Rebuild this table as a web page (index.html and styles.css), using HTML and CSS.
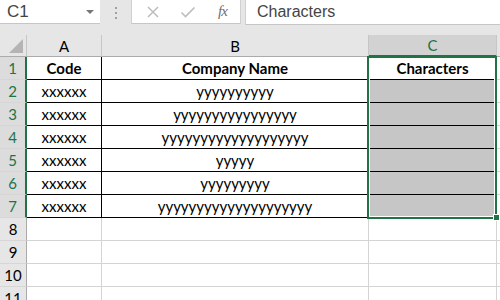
FILE: index.html
```html
<!DOCTYPE html>
<html>
<head>
<meta charset="utf-8">
<link rel="stylesheet" href="styles.css">
</head>
<body>
<div class="app">
  <div class="formula-bar">
    <div class="name-box"><span>C1</span><span class="caret"></span></div>
    <div class="grip"><i></i><i></i><i></i></div>
    <div class="fx-buttons">
      <svg class="btn" width="14" height="14" viewBox="0 0 14 14"><path d="M2 2 L12 12 M12 2 L2 12" stroke="#bdbdbd" stroke-width="1.5" fill="none"/></svg>
      <svg class="btn" width="16" height="14" viewBox="0 0 16 14"><path d="M1.5 7.5 L5.5 11.5 L14.5 2.5" stroke="#bdbdbd" stroke-width="1.6" fill="none"/></svg>
      <span class="fx">fx</span>
    </div>
    <div class="formula-input">Characters</div>
  </div>

  <div class="sheet">
    <div class="grid">
      <div class="hd corner"><span class="tri"></span></div>
      <div class="hd col">A</div>
      <div class="hd col">B</div>
      <div class="hd col sel">C</div>
      <div class="hd col tail"></div>

      <div class="rh sel">1</div>
      <div class="c t b">Code</div>
      <div class="c t b">Company Name</div>
      <div class="c t b">Characters</div>
      <div class="c tail"></div>

      <div class="rh sel">2</div>
      <div class="c t">xxxxxx</div>
      <div class="c t">yyyyyyyyyy</div>
      <div class="c t fill"></div>
      <div class="c tail"></div>

      <div class="rh sel">3</div>
      <div class="c t">xxxxxx</div>
      <div class="c t">yyyyyyyyyyyyyyyy</div>
      <div class="c t fill"></div>
      <div class="c tail"></div>

      <div class="rh sel">4</div>
      <div class="c t">xxxxxx</div>
      <div class="c t">yyyyyyyyyyyyyyyyyyy</div>
      <div class="c t fill"></div>
      <div class="c tail"></div>

      <div class="rh sel">5</div>
      <div class="c t">xxxxxx</div>
      <div class="c t">yyyyy</div>
      <div class="c t fill"></div>
      <div class="c tail"></div>

      <div class="rh sel">6</div>
      <div class="c t">xxxxxx</div>
      <div class="c t">yyyyyyyyy</div>
      <div class="c t fill"></div>
      <div class="c tail"></div>

      <div class="rh sel">7</div>
      <div class="c t">xxxxxx</div>
      <div class="c t">yyyyyyyyyyyyyyyyyyyy</div>
      <div class="c t fill"></div>
      <div class="c tail"></div>

      <div class="rh">8</div><div class="c"></div><div class="c"></div><div class="c"></div><div class="c tail"></div>
      <div class="rh">9</div><div class="c"></div><div class="c"></div><div class="c"></div><div class="c tail"></div>
      <div class="rh">10</div><div class="c"></div><div class="c"></div><div class="c"></div><div class="c tail"></div>
      <div class="rh">11</div><div class="c"></div><div class="c"></div><div class="c"></div><div class="c tail"></div>
    </div>
    <div class="selection"></div>
    <div class="handle"></div>
  </div>
</div>
</body>
</html>
```

FILE: styles.css
```css
html, body {
  margin: 0;
  padding: 0;
}

body {
  width: 500px;
  height: 300px;
  overflow: hidden;
  background: #e6e6e6;
  font-family: Lato, "Open Sans", sans-serif;
}

/* ---- formula bar ---- */
.formula-bar {
  display: flex;
  height: 25px;
}

.name-box,
.fx-buttons,
.formula-input {
  background: #fff;
  height: 24px;
  border-bottom: 1px solid #c6c6c6;
  box-sizing: content-box;
}

.name-box {
  width: 100px;
  display: flex;
  align-items: center;
  justify-content: space-between;
  padding: 0 6px 0 7px;
  box-sizing: border-box;
  font-family: "Liberation Sans", Arial, sans-serif;
  font-size: 17px;
  color: #444;
}

.caret {
  width: 0;
  height: 0;
  border-left: 4px solid transparent;
  border-right: 4px solid transparent;
  border-top: 4px solid #777;
  margin-top: 1px;
}

.grip {
  width: 31px;
  display: flex;
  flex-direction: column;
  align-items: center;
  padding-top: 7px;
  gap: 3px;
  box-sizing: border-box;
}

.grip i {
  display: block;
  width: 2px;
  height: 2px;
  background: #a0a0a0;
}

.fx-buttons {
  width: 110px;
  display: flex;
  align-items: center;
  box-sizing: border-box;
  border-left: 1px solid #d0d0d0;
  border-right: 1px solid #d0d0d0;
  padding-left: 14px;
  gap: 20px;
}

.fx {
  font-family: "Liberation Serif", serif;
  font-style: italic;
  font-size: 15px;
  color: #707070;
  margin-left: 2px;
  letter-spacing: -1px;
}

.formula-input {
  flex: 1;
  margin-left: 4px;
  border-left: 1px solid #d0d0d0;
  padding-left: 11px;
  display: flex;
  align-items: center;
  font-family: "Liberation Sans", Arial, sans-serif;
  font-size: 16px;
  color: #444;
}

/* ---- sheet ---- */
.sheet {
  position: relative;
  margin-top: 10px;
}

.grid {
  display: grid;
  grid-template-columns: 27px 75px 267px 128px 3px;
  grid-template-rows: 22px repeat(11, 23px);
  background: #fff;
}

.grid > div {
  box-sizing: border-box;
  display: flex;
  align-items: center;
  justify-content: center;
  font-size: 15px;
  color: #000;
  white-space: nowrap;
  overflow: hidden;
}

.hd {
  background: #e6e6e6;
  border-right: 1px solid #c6c6c6;
  border-bottom: 1px solid #ababab;
  color: #222;
}

.hd.col.sel {
  background: #d2d2d2;
  color: #217346;
  border-bottom: 2px solid #217346;
  border-right: 1px solid #c6c6c6;
}

.hd.tail {
  border-right: none;
  background: #e6e6e6;
}

.corner {
  position: relative;
}

.tri {
  position: absolute;
  right: 3px;
  bottom: 3px;
  width: 0;
  height: 0;
  border-left: 14px solid transparent;
  border-bottom: 14px solid #b4b4b4;
}

.rh {
  background: #e6e6e6;
  border-right: 1px solid #ababab;
  border-bottom: 1px solid #d6d6d6;
  color: #222;
}

.rh.sel {
  background: #dcdcdc;
  color: #217346;
  border-right: 2px solid #217346;
}

.c {
  border-right: 1px solid #d4d4d4;
  border-bottom: 1px solid #d4d4d4;
}

.c.t {
  border-right: 1px solid #000;
  border-bottom: 1px solid #000;
}

.c.b {
  font-weight: 700;
}

.c.fill {
  background: #c6c6c6;
}

.c.tail {
  border-right: none;
  background: #fff;
}

/* active range outline */
.selection {
  position: absolute;
  left: 367px;
  top: 21px;
  width: 130px;
  height: 163px;
  box-sizing: border-box;
  border: 2px solid #217346;
  box-shadow: inset 0 0 0 1px #fff;
}

.handle {
  position: absolute;
  left: 493px;
  top: 179px;
  width: 5px;
  height: 5px;
  background: #217346;
  border: 1px solid #fff;
}
```
